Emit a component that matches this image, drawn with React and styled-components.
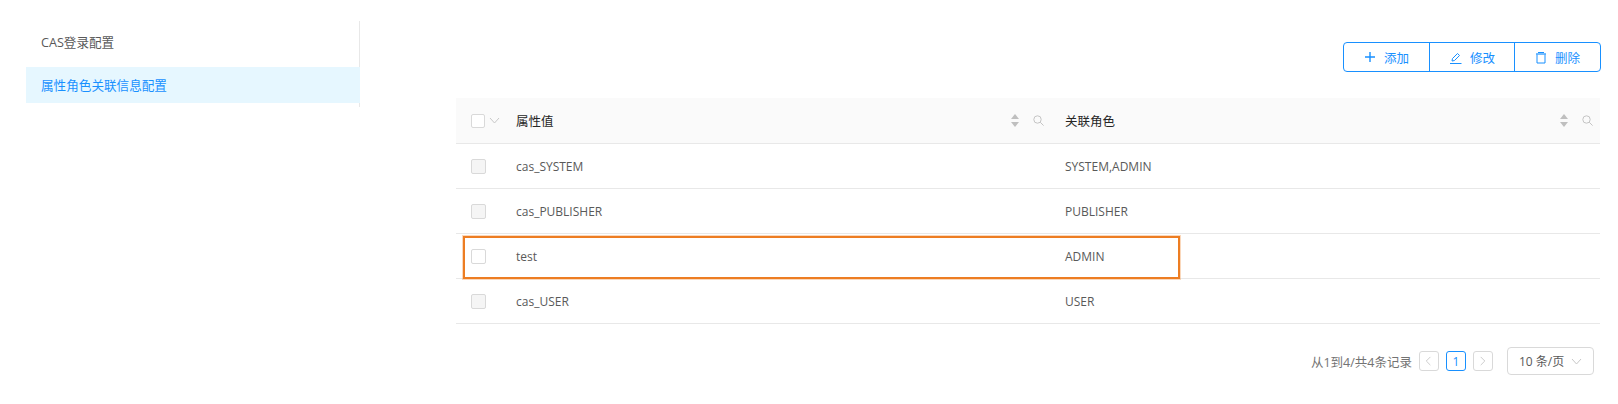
import React from "react";
import styled, { createGlobalStyle } from "styled-components";

const Global = createGlobalStyle`
  html, body { margin: 0; padding: 0; background: #fff; }
  body { font-family: "Open Sans", "Noto Sans CJK SC", sans-serif; font-size: 12px; color: #595959; }
`;

const Page = styled.div`
  display: flex;
  width: 1618px;
  height: 404px;
  overflow: hidden;
  padding: 21px 18px 0 26px;
  box-sizing: border-box;
`;

const Side = styled.nav`
  width: 334px;
  height: 86px;
  flex: none;
  border-right: 1px solid #e8e8e8;
  box-sizing: border-box;
`;

const SideItem = styled.div`
  height: ${(p) => (p.$active ? "36px" : "46px")};
  margin-right: ${(p) => (p.$active ? "-1px" : "0")};
  padding-left: 15px;
  line-height: ${(p) => (p.$active ? "37px" : "43px")};
  background: ${(p) => (p.$active ? "#e6f7ff" : "transparent")};
  color: ${(p) => (p.$active ? "#1890ff" : "#595959")};
  font-size: 12.6px;
`;

const Main = styled.main`
  flex: 1;
  margin-left: 96px;
  display: flex;
  flex-direction: column;
  position: relative;
`;

const Toolbar = styled.div`
  display: flex;
  justify-content: flex-end;
  margin: 21px -1px 26px 0;
`;

const BtnGroup = styled.div`
  display: flex;
  height: 30px;
  box-sizing: border-box;
  border: 1px solid #1890ff;
  border-radius: 4px;
`;

const Btn = styled.div`
  width: 85px;
  display: flex;
  align-items: center;
  justify-content: center;
  gap: 8px;
  color: #1890ff;
  font-size: 12.5px;
  box-sizing: border-box;
  & + & { border-left: 1px solid #1890ff; }
  &:last-child { width: 86px; }
  svg { flex: none; }
`;

const Row = styled.div`
  display: grid;
  grid-template-columns: 60px 549px 1fr;
  height: ${(p) => (p.$head ? 46 : 45)}px;
  box-sizing: border-box;
  align-items: center;
  border-bottom: 1px solid #e8e8e8;
  background: ${(p) => (p.$head ? "#fafafa" : "#fff")};
`;

const CheckCell = styled.div`
  display: flex;
  align-items: center;
  padding-left: 15px;
  gap: 4px;
`;

const Check = styled.span`
  display: block;
  box-sizing: border-box;
  width: ${(p) => (p.$head ? 14 : 15)}px;
  height: ${(p) => (p.$head ? 14 : 15)}px;
  border: 1px solid #d9d9d9;
  border-radius: 2px;
  background: ${(p) => (p.$off ? "#f5f5f5" : "#fff")};
`;

const HeadCell = styled.div`
  display: flex;
  align-items: center;
  color: #262626;
  font-size: 12.5px;
  padding-right: ${(p) => p.$pad}px;
`;

const HeadLabel = styled.span`
  flex: 1;
`;

const HeadIcons = styled.span`
  display: flex;
  align-items: center;
  gap: 14px;
`;

const Cell = styled.div`
  color: #595959;
  font-size: 12px;
`;

const Footer = styled.div`
  display: flex;
  align-items: center;
  justify-content: flex-end;
  margin-top: 23px;
  margin-right: 6px;
`;

const Total = styled.span`
  color: #737373;
  font-size: 12.5px;
  margin-right: 7px;
`;

const PageBtn = styled.span`
  width: 20px;
  height: 20px;
  box-sizing: border-box;
  display: flex;
  align-items: center;
  justify-content: center;
  border: 1px solid ${(p) => (p.$active ? "#1890ff" : "#d9d9d9")};
  border-radius: 3px;
  color: #1890ff;
  font-size: 12px;
  margin-right: 7px;
`;

const SizeSelect = styled.div`
  width: 87px;
  height: 28px;
  box-sizing: border-box;
  margin-left: 7px;
  border: 1px solid #d9d9d9;
  border-radius: 4px;
  display: flex;
  align-items: center;
  justify-content: space-between;
  padding: 0 11px 0 11px;
  color: #595959;
  font-size: 12px;
`;

const Highlight = styled.div`
  position: absolute;
  left: 7px;
  top: 215px;
  width: 717px;
  height: 43px;
  box-sizing: border-box;
  border: 2px solid #ed7d22;
  box-shadow: 0 0 0 1px rgba(237, 125, 34, 0.3);
  pointer-events: none;
`;

const Plus = () => (
  <svg width="12" height="12" viewBox="0 0 12 12"><path d="M6 1v10M1 6h10" stroke="#1890ff" strokeWidth="1.4" fill="none" /></svg>
);
const Pen = () => (
  <svg width="13" height="13" viewBox="0 0 13 13" fill="none" stroke="#1890ff" strokeWidth="1"><path d="M1 12.5h11.5" /><path d="M3 10l.5-2.5L8.5 2.5l2 2-5 5z" /></svg>
);
const Trash = () => (
  <svg width="12" height="13" viewBox="0 0 12 13" fill="none" stroke="#1890ff" strokeWidth="1"><path d="M2 3.5V12h8V3.5" /><path d="M1 3h10" strokeWidth="1.2" /><path d="M3 1.5h6" /></svg>
);
const Sort = () => (
  <svg width="8" height="13" viewBox="0 0 8 13" fill="#bfbfbf"><path d="M4 0l4 5H0z" /><path d="M4 13l4-5H0z" /></svg>
);
const Search = () => (
  <svg width="11" height="11" viewBox="0 0 11 11" fill="none" stroke="#c4c4c4" strokeWidth="1"><circle cx="4.5" cy="4.5" r="3.7" /><path d="M7.2 7.2L10.6 10.6" /></svg>
);
const Chevron = ({ dir = "down", color = "#c8c8c8", size = 10 }) => {
  const d = { down: "M1 3l4.5 5L10 3", left: "M7 1L2.5 5.5 7 10", right: "M3 1l4.5 4.5L3 10" }[dir];
  return <svg width={size} height={size} viewBox="0 0 11 11" fill="none" stroke={color} strokeWidth="1"><path d={d} /></svg>;
};

const rows = [
  ["cas_SYSTEM", "SYSTEM,ADMIN", true],
  ["cas_PUBLISHER", "PUBLISHER", true],
  ["test", "ADMIN", false],
  ["cas_USER", "USER", true],
];

export default function App() {
  return (
    <Page>
      <Global />
      <Side>
        <SideItem>CAS登录配置</SideItem>
        <SideItem $active>属性角色关联信息配置</SideItem>
      </Side>
      <Main>
        <Toolbar>
          <BtnGroup>
            <Btn><Plus />添加</Btn>
            <Btn><Pen />修改</Btn>
            <Btn><Trash />删除</Btn>
          </BtnGroup>
        </Toolbar>
        <Row $head>
          <CheckCell><Check $head /><Chevron size={11} /></CheckCell>
          <HeadCell $pad={21}>
            <HeadLabel>属性值</HeadLabel>
            <HeadIcons><Sort /><Search /></HeadIcons>
          </HeadCell>
          <HeadCell $pad={7}>
            <HeadLabel>关联角色</HeadLabel>
            <HeadIcons><Sort /><Search /></HeadIcons>
          </HeadCell>
        </Row>
        {rows.map(([a, b, off]) => (
          <Row key={a}>
            <CheckCell><Check $off={off} /></CheckCell>
            <Cell>{a}</Cell>
            <Cell>{b}</Cell>
          </Row>
        ))}
        <Highlight />
        <Footer>
          <Total>从1到4/共4条记录</Total>
          <PageBtn><Chevron dir="left" /></PageBtn>
          <PageBtn $active>1</PageBtn>
          <PageBtn><Chevron dir="right" /></PageBtn>
          <SizeSelect>10 条/页<Chevron size={11} /></SizeSelect>
        </Footer>
      </Main>
    </Page>
  );
}
